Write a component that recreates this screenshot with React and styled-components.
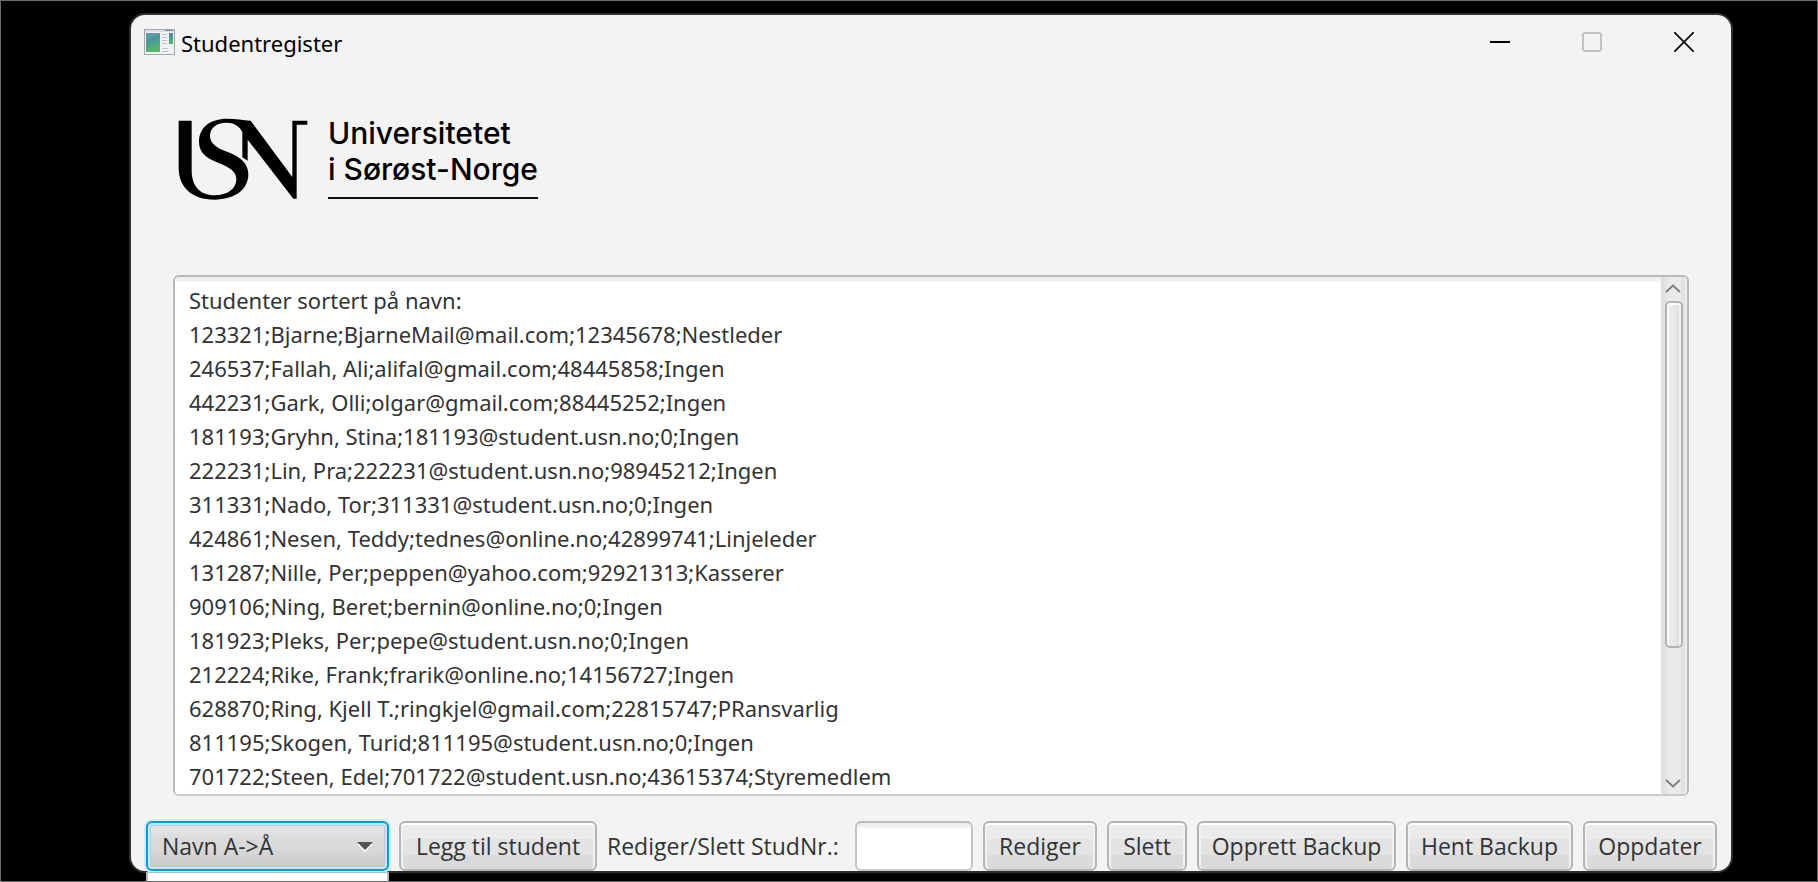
import React from "react";
import styled, { createGlobalStyle, css } from "styled-components";

const textFont = `"Segoe UI", "Noto Sans", "Open Sans", sans-serif`;
const controlFont = `"Segoe UI", "Open Sans", "Noto Sans", sans-serif`;

const GlobalStyle = createGlobalStyle`
  *, *::before, *::after { box-sizing: border-box; }
  body { margin: 0; background: #000; font-family: ${textFont}; color: #333; }
  button, input, textarea, select { font: inherit; color: inherit; margin: 0; }
`;

const Desktop = styled.div`
  min-height: 100vh;
  display: flex;
  flex-direction: column;
  background: #000;
  border: 1px solid #6a6a6a;
  padding: 12px 84px 8px 128px;
  overflow: hidden;
`;

const Window = styled.main`
  flex: 1;
  display: flex;
  flex-direction: column;
  background: #f3f3f3;
  border: 2px solid #2e3030;
  border-radius: 16px;
`;

const TitleBar = styled.header`
  display: flex;
  align-items: center;
  height: 54px;
  padding: 0 1px 0 13px;
  color: #000;
`;

const Title = styled.h1`
  flex: 1;
  margin: 0 0 0 6px;
  padding-top: 2px;
  font-size: 22px;
  line-height: 32px;
  font-weight: 400;
`;

const CaptionButton = styled.button`
  width: 92px;
  height: 54px;
  padding: 0;
  border: 0;
  background: transparent;
  display: grid;
  place-items: center;
`;

const Content = styled.section`
  flex: 1;
  display: flex;
  flex-direction: column;
  padding: 46px 42px 0;
`;

const Brand = styled.div`
  display: flex;
  gap: 20px;
  height: 160px;
  padding-left: 5px;

  svg { margin-top: 3px; }
`;

const BrandName = styled.p`
  align-self: flex-start;
  margin: 0;
  padding-bottom: 10px;
  border-bottom: 2px solid #111;
  font-family: Inter, Roboto, sans-serif;
  font-weight: 500;
  font-size: 30px;
  line-height: 36px;
  color: #000;
`;

const ListBox = styled.div`
  flex: 1;
  display: flex;
  min-height: 480px;
  border: 2px solid #b9bab9;
  border-bottom-color: #cbcbcb;
  border-radius: 6px;
  background: #fff;
  overflow: hidden;
`;

const Listing = styled.textarea`
  flex: 1;
  min-width: 0;
  padding: 6px 14px;
  border: 0;
  outline: 0;
  resize: none;
  overflow: hidden;
  white-space: pre;
  background: linear-gradient(#ececec, #f4f4f4 5px, #fff 5px);
  font-size: 22px;
  line-height: 34px;
`;

const ScrollBar = styled.div`
  width: 26px;
  display: flex;
  flex-direction: column;
  align-items: center;
  background: linear-gradient(90deg, #dedede 2px, #e2e2e2 2px 6px, #eaeaea 6px 20px, #e2e2e2 20px 24px, #ececec 24px);
`;

const ScrollArrow = styled.button`
  width: 18px;
  height: 24px;
  padding: 0;
  border: 0;
  background: transparent;
  display: grid;
  place-items: center;
`;

const Track = styled.div`
  flex: 1;
  width: 18px;
`;

const Thumb = styled.div`
  height: 74%;
  border: 2px solid #b3b3b3;
  border-radius: 5px;
  background: linear-gradient(90deg, #fafafa 2px, #ebebeb 2px 6px, #dfdfdf 12px, #f2f2f2 12px);
  box-shadow: inset 0 2px #fff;
`;

const Toolbar = styled.form`
  display: flex;
  align-items: center;
  gap: 10px;
  padding: 25px 14px 0 15px;
  font-family: ${controlFont};
  font-size: 23px;
  line-height: 32px;
`;

const controlBox = css`
  height: 50px;
  border: 2px solid #b4b4b4;
  border-radius: 6px;
`;

const Button = styled.button`
  ${controlBox}
  flex: 0 0 ${(p) => p.$width}px;
  padding: 0;
  white-space: nowrap;
  background: linear-gradient(#ebebeb 16px, #e3e3e3 16px 32px, #dadada 32px);
  box-shadow: inset 0 2px #fff, inset 2px 0 #f1f1f1, inset -2px 0 #f1f1f1;
`;

const Picker = styled.div`
  position: relative;
  flex: 0 0 243px;
`;

const Select = styled.select`
  ${controlBox}
  display: block;
  width: 100%;
  padding: 0 14px;
  appearance: none;
  outline: 0;
  border-color: #039ed3;
  background: linear-gradient(#e3e3e3 8px, #dbdbdb 16px, #d9d9d9 26px, #c8c8c8);
  box-shadow: 0 0 0 2px #d0ebf4, inset 0 0 0 2px #cfe4ec, inset 0 0 0 3px #b9ccd3;
`;

const PickerArrow = styled.svg`
  position: absolute;
  right: 16px;
  top: 21px;
  pointer-events: none;
`;

const PickerPopup = styled.div`
  position: absolute;
  top: 51px;
  left: 0;
  right: 0;
  height: 24px;
  background: #fff;
  border: 2px solid #b8b8b8;
  border-width: 1px 2px 0;
  z-index: 1;
`;

const FieldLabel = styled.label`
  flex: 1;
  white-space: nowrap;
`;

const Field = styled.input`
  ${controlBox}
  flex: 0 0 118px;
  min-width: 0;
  padding: 0 14px;
  outline: 0;
  border-color: #b9bab9 #c4c4c4 #cbcbcb;
  background: linear-gradient(#ececec, #f4f4f4 5px, #fff 5px);
`;

const lines = [
  "Studenter sortert på navn:",
  "123321;Bjarne;BjarneMail@mail.com;12345678;Nestleder",
  "246537;Fallah, Ali;alifal@gmail.com;48445858;Ingen",
  "442231;Gark, Olli;olgar@gmail.com;88445252;Ingen",
  "181193;Gryhn, Stina;181193@student.usn.no;0;Ingen",
  "222231;Lin, Pra;222231@student.usn.no;98945212;Ingen",
  "311331;Nado, Tor;311331@student.usn.no;0;Ingen",
  "424861;Nesen, Teddy;tednes@online.no;42899741;Linjeleder",
  "131287;Nille, Per;peppen@yahoo.com;92921313;Kasserer",
  "909106;Ning, Beret;bernin@online.no;0;Ingen",
  "181923;Pleks, Per;pepe@student.usn.no;0;Ingen",
  "212224;Rike, Frank;frarik@online.no;14156727;Ingen",
  "628870;Ring, Kjell T.;ringkjel@gmail.com;22815747;PRansvarlig",
  "811195;Skogen, Turid;811195@student.usn.no;0;Ingen",
  "701722;Steen, Edel;701722@student.usn.no;43615374;Styremedlem",
];

const AppIcon = () => (
  <svg width="31" height="26" viewBox="0 0 31 26" aria-hidden="true">
    <defs>
      <linearGradient id="pane" x1="0" y1="0" x2="0.3" y2="1">
        <stop offset="0" stopColor="#4a86ad" />
        <stop offset="0.5" stopColor="#479b93" />
        <stop offset="1" stopColor="#5cb56c" />
      </linearGradient>
    </defs>
    <rect x="0.5" y="0.5" width="30" height="25" fill="#f0f2f4" stroke="#a0a7ad" />
    <path d="M1 2H30" stroke="#c9d0d6" />
    <path d="M21 1.500H29" stroke="#7f8b95" />
    <rect x="2" y="4" width="14" height="19" fill="url(#pane)" />
    <path d="M2 13Q7 6 16 5V4H2Z" fill="#fff" opacity="0.12" />
    <path d="M18 5.500H23M18 8.500H23M18 11.500H23M18 14.500H23M18 19.500H24M18 22.500H24" stroke="#bfc3c7" />
    <rect x="25" y="4" width="4" height="11" fill="url(#pane)" />
  </svg>
);

const UsnMark = () => (
  <svg width="130" height="82" viewBox="56 55 390 246" role="img" aria-label="USN">
    <path
      fillRule="evenodd"
      d="M58 63H97V212C97 260 122 287 165 287C205 287 231 267 231 239C231 215 210 203 178 190C145 176 119 162 119 126C119 84 152 57 203 57C230 57 250 61 274 63L399 232V63H444V75H412V297H402L265 120V183L249 173V97C240 79 224 69 201 69C171 69 152 85 152 108C152 133 174 145 207 158C241 171 267 190 267 224C267 270 226 300 165 300C100 300 58 264 58 205Z"
    />
  </svg>
);

export default function App() {
  return (
    <Desktop>
      <GlobalStyle />
      <Window>
        <TitleBar>
          <AppIcon />
          <Title>Studentregister</Title>
          <CaptionButton type="button" aria-label="Minimer">
            <svg width="20" height="20"><path d="M0 10H20" stroke="#000" strokeWidth="2" /></svg>
          </CaptionButton>
          <CaptionButton type="button" aria-label="Maksimer" disabled>
            <svg width="20" height="20"><rect x="1" y="1" width="18" height="18" rx="2" fill="none" stroke="#c2c2c2" strokeWidth="2" /></svg>
          </CaptionButton>
          <CaptionButton type="button" aria-label="Lukk">
            <svg width="20" height="20"><path d="M.7 .7L19.300 19.300M19.300 .7L.7 19.300" stroke="#111" strokeWidth="1.800" strokeLinecap="round" /></svg>
          </CaptionButton>
        </TitleBar>

        <Content>
          <Brand>
            <UsnMark />
            <BrandName>
              Universitetet
              <br />
              i Sørøst-Norge
            </BrandName>
          </Brand>
          <ListBox>
            <Listing aria-label="Studenter" readOnly wrap="off" value={lines.join("\n")} />
            <ScrollBar>
              <ScrollArrow type="button" aria-label="Rull opp">
                <svg width="18" height="12"><path d="M1 9L8 2.500L15 9" fill="none" stroke="#808080" strokeWidth="2" /></svg>
              </ScrollArrow>
              <Track><Thumb /></Track>
              <ScrollArrow type="button" aria-label="Rull ned">
                <svg width="18" height="12"><path d="M1 4L8 10.500L15 4" fill="none" stroke="#808080" strokeWidth="2" /></svg>
              </ScrollArrow>
            </ScrollBar>
          </ListBox>
        </Content>

        <Toolbar onSubmit={(e) => e.preventDefault()}>
          <Picker>
            <Select aria-label="Sortering" defaultValue="navn">
              <option value="navn">{"Navn A->Å"}</option>
            </Select>
            <PickerArrow width="16" height="10" aria-hidden="true">
              <path d="M0 2H16L8 10Z" fill="#fff" />
              <path d="M0 0H16L8 8Z" fill="#555" />
            </PickerArrow>
            <PickerPopup />
          </Picker>
          <Button type="button" $width={198}>Legg til student</Button>
          <FieldLabel htmlFor="studnr">Rediger/Slett StudNr.:</FieldLabel>
          <Field id="studnr" type="text" />
          <Button type="button" $width={114}>Rediger</Button>
          <Button type="button" $width={80}>Slett</Button>
          <Button type="button" $width={199}>Opprett Backup</Button>
          <Button type="button" $width={167}>Hent Backup</Button>
          <Button type="button" $width={134}>Oppdater</Button>
        </Toolbar>
      </Window>
    </Desktop>
  );
}
